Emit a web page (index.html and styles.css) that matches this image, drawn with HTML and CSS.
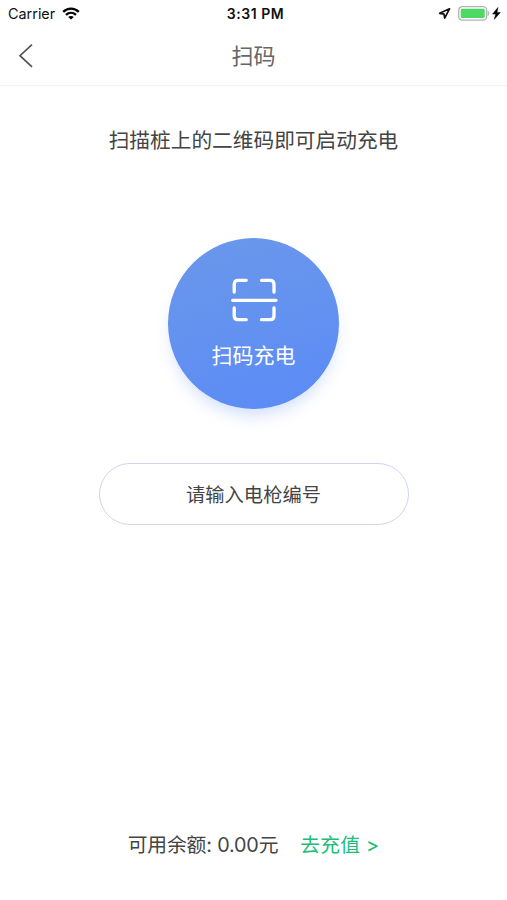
FILE: index.html
```
<!DOCTYPE html>
<html lang="zh-CN">
<head>
<meta charset="utf-8">
<title>扫码</title>
<link rel="stylesheet" href="styles.css">
</head>
<body>
<div class="screen">
  <div class="status">
    <div class="status-left">
      <span>Carrier</span>
      <svg class="wifi" width="18" height="13" viewBox="0 0 18 13" fill="none" stroke="#000" stroke-width="2.3">
        <path d="M1.2 4.9C5.6.5 12.4.5 16.8 4.9"/>
        <path d="M4 7.9c2.9-2.7 7.1-2.7 10 0"/>
        <path d="M9 12.6 6.2 10c1.7-1.4 3.9-1.4 5.6 0z" fill="#000" stroke="none"/>
      </svg>
    </div>
    <div class="status-time">3:31 PM</div>
    <div class="status-right">
      <svg width="13" height="13" viewBox="0 0 13 13" fill="none" stroke="#111" stroke-width="1.7" stroke-linejoin="round"><path d="M11.5 1.8 1.7 6.3l4.3.8.7 4.100z"/></svg>
      <svg class="battery" width="32" height="15" viewBox="0 0 32 15">
        <rect x=".7" y=".7" width="28" height="13.4" rx="3.6" fill="#fff" stroke="#b3b3b3" stroke-width="1.3"/>
        <rect x="2.7" y="2.7" width="24" height="9.4" rx="1.3" fill="#4cd964"/>
        <path d="M30.2 5.2q1.5 2.2 0 4.4z" fill="#aaa" stroke="#aaa" stroke-width=".6"/>
      </svg>
      <svg class="bolt" width="9" height="13" viewBox="0 0 9 13"><path d="M5.9.5.6 7.1h3.1L2.4 12.3 8.3 5.400H5z" fill="#000" stroke="#000" stroke-width=".5"/></svg>
    </div>
  </div>
  <header class="nav">
    <svg class="back" width="16" height="26" viewBox="0 0 16 26" fill="none" stroke="#555" stroke-width="1.7"><path d="M14 1.700 2 12.700 14 23.800"/></svg>
    <h1 class="title">扫码</h1>
  </header>
  <main class="content">
    <p class="prompt">扫描桩上的二维码即可启动充电</p>
    <button class="scan">
      <svg width="48" height="44" viewBox="0 0 48 44" fill="none" stroke="#fff" stroke-width="3.3" stroke-linecap="round">
        <path d="M4.200 14V6.300q0-4 4-4h8M31.500 2.300h8.500q4 0 4 4v7.700M4.200 30v7.700q0 4 4 4h8M31.500 41.700h8.500q4 0 4-4V30M2.700 22.300h43.300"/>
      </svg>
      <span class="scan-label">扫码充电</span>
    </button>
    <button class="code-entry">请输入电枪编号</button>
  </main>
  <footer class="balance">
    <span class="amount">可用余额: 0.00元</span>
    <a class="recharge">去充值 &gt;</a>
  </footer>
</div>
</body>
</html>
```
FILE: styles.css
```
* {
  box-sizing: border-box;
}

body {
  margin: 0;
  background: #fff;
  color: #444;
  font-family: Inter, "Noto Sans CJK SC", sans-serif;
}

svg {
  display: block;
  flex: none;
}

button {
  padding: 0;
  border: 0;
  font-family: inherit;
}

.screen {
  display: flex;
  flex-direction: column;
  height: 900px;
}

.status {
  display: grid;
  grid-template-columns: 1fr auto 1fr;
  align-items: center;
  height: 27px;
  padding: 0 6px 0 8px;
  color: #111;
  font-size: 14.4px;
}

.status-left,
.status-right {
  display: flex;
  align-items: center;
}

.wifi {
  margin-left: 7px;
}

.status-time {
  padding-left: 2px;
  font-size: 14px;
  font-weight: 600;
  letter-spacing: .55px;
}

.status-right {
  justify-content: flex-end;
}

.battery {
  margin-left: 7px;
}

.bolt {
  margin-left: 2px;
}

.nav {
  display: grid;
  grid-template-columns: 36px 1fr 36px;
  align-items: center;
  height: 59px;
  border-bottom: 1px solid #f3f3f3;
}

.back {
  margin-left: 18px;
}

.title {
  margin: 0;
  color: #666;
  font-size: 22px;
  font-weight: 400;
  line-height: 32px;
  text-align: center;
}

.content {
  display: flex;
  flex: 1;
  flex-direction: column;
  align-items: center;
}

.prompt {
  margin: 40px 0 0;
  font-size: 20.7px;
  line-height: 30px;
}

.scan {
  display: flex;
  flex-direction: column;
  align-items: center;
  width: 171px;
  height: 171px;
  margin-top: 82px;
  padding-top: 40px;
  border-radius: 50%;
  background: linear-gradient(165deg, #6b98ea, #5a8bf6);
  box-shadow: 0 10px 16px -4px rgba(90, 139, 246, .28);
  color: #fff;
}

.scan-label {
  margin-top: 19px;
  font-size: 21px;
  line-height: 30px;
}

.code-entry {
  width: 310px;
  height: 62px;
  margin-top: 54px;
  border: 1.5px solid #d0d5f0;
  border-radius: 31px;
  background: #fff;
  color: #444;
  font-size: 19.3px;
}

.balance {
  display: flex;
  justify-content: center;
  gap: 22px;
  height: 71px;
  font-size: 19.8px;
  line-height: 32px;
}

.amount {
  letter-spacing: -.15px;
}

.recharge {
  color: #20bd78;
  letter-spacing: .2px;
}
```
